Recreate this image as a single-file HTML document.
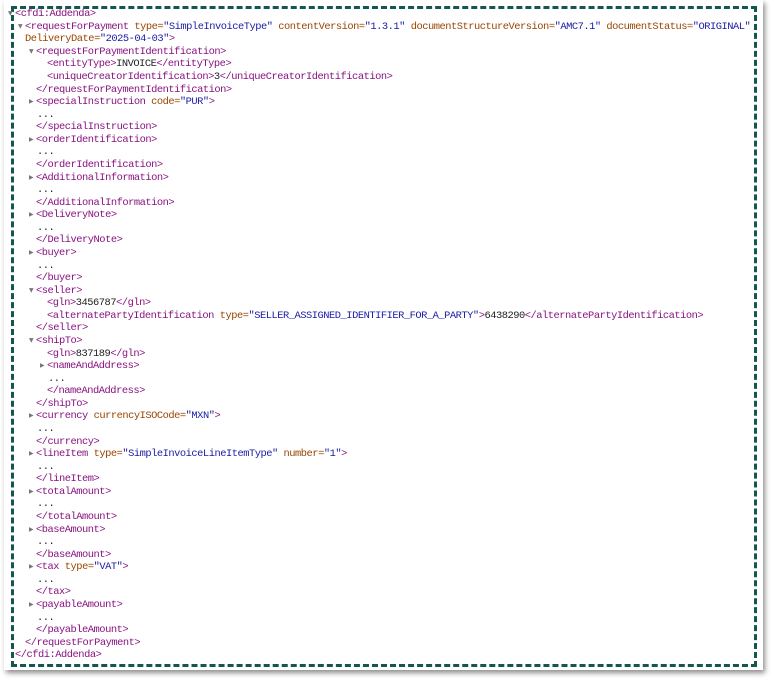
<!DOCTYPE html>
<html><head><meta charset="utf-8">
<style>
html,body{margin:0;padding:0;background:#fff;}
body{width:771px;height:679px;position:relative;overflow:hidden;}
.panel{position:absolute;left:4px;top:0;width:759px;height:670px;background:#fff;box-shadow:2px 3px 5px rgba(0,0,0,0.45);}
.border{position:absolute;left:11px;top:6px;width:740px;height:655px;border:3px dashed #14574f;}
.w{position:absolute;left:0;top:1.5px;width:771px;height:670px;}
.l{position:absolute;font-family:"Liberation Mono",monospace;font-size:10.4px;letter-spacing:-0.48px;line-height:12.57px;height:12.57px;white-space:pre;color:#222;}
.t{color:#881280}.a{color:#994500}.v{color:#1a1aa6}
.tri{position:absolute;left:-7px;top:0;font-size:6px;letter-spacing:0;color:#777;font-family:"DejaVu Sans",sans-serif;}
</style></head><body>
<div class="panel"></div>
<div class="border"></div>
<div class="w">
<div class="l" style="left:15px;top:6.7px"><span class="tri">▼</span><span class="t">&lt;cfdi:Addenda&gt;</span></div>
<div class="l" style="left:25px;top:19.27px"><span class="tri">▼</span><span class="t">&lt;requestForPayment</span> <span class="a">type=</span><span class="v">"SimpleInvoiceType"</span> <span class="a">contentVersion=</span><span class="v">"1.3.1"</span> <span class="a">documentStructureVersion=</span><span class="v">"AMC7.1"</span> <span class="a">documentStatus=</span><span class="v">"ORIGINAL"</span></div>
<div class="l" style="left:25px;top:31.84px"><span class="a">DeliveryDate=</span><span class="v">"2025-04-03"</span><span class="t">&gt;</span></div>
<div class="l" style="left:36px;top:44.41px"><span class="tri">▼</span><span class="t">&lt;requestForPaymentIdentification&gt;</span></div>
<div class="l" style="left:47px;top:56.98px"><span class="t">&lt;entityType&gt;</span>INVOICE<span class="t">&lt;/entityType&gt;</span></div>
<div class="l" style="left:47px;top:69.55px"><span class="t">&lt;uniqueCreatorIdentification&gt;</span>3<span class="t">&lt;/uniqueCreatorIdentification&gt;</span></div>
<div class="l" style="left:36px;top:82.12px"><span class="t">&lt;/requestForPaymentIdentification&gt;</span></div>
<div class="l" style="left:36px;top:94.69px"><span class="tri">▶</span><span class="t">&lt;specialInstruction</span> <span class="a">code=</span><span class="v">"PUR"</span><span class="t">&gt;</span></div>
<div class="l" style="left:37px;top:107.26px">...</div>
<div class="l" style="left:36px;top:119.83px"><span class="t">&lt;/specialInstruction&gt;</span></div>
<div class="l" style="left:36px;top:132.4px"><span class="tri">▶</span><span class="t">&lt;orderIdentification&gt;</span></div>
<div class="l" style="left:37px;top:144.97px">...</div>
<div class="l" style="left:36px;top:157.54px"><span class="t">&lt;/orderIdentification&gt;</span></div>
<div class="l" style="left:36px;top:170.11px"><span class="tri">▶</span><span class="t">&lt;AdditionalInformation&gt;</span></div>
<div class="l" style="left:37px;top:182.68px">...</div>
<div class="l" style="left:36px;top:195.25px"><span class="t">&lt;/AdditionalInformation&gt;</span></div>
<div class="l" style="left:36px;top:207.82px"><span class="tri">▶</span><span class="t">&lt;DeliveryNote&gt;</span></div>
<div class="l" style="left:37px;top:220.39px">...</div>
<div class="l" style="left:36px;top:232.96px"><span class="t">&lt;/DeliveryNote&gt;</span></div>
<div class="l" style="left:36px;top:245.53px"><span class="tri">▶</span><span class="t">&lt;buyer&gt;</span></div>
<div class="l" style="left:37px;top:258.1px">...</div>
<div class="l" style="left:36px;top:270.67px"><span class="t">&lt;/buyer&gt;</span></div>
<div class="l" style="left:36px;top:283.24px"><span class="tri">▼</span><span class="t">&lt;seller&gt;</span></div>
<div class="l" style="left:47px;top:295.81px"><span class="t">&lt;gln&gt;</span>3456787<span class="t">&lt;/gln&gt;</span></div>
<div class="l" style="left:47px;top:308.38px"><span class="t">&lt;alternatePartyIdentification</span> <span class="a">type=</span><span class="v">"SELLER_ASSIGNED_IDENTIFIER_FOR_A_PARTY"</span><span class="t">&gt;</span>6438290<span class="t">&lt;/alternatePartyIdentification&gt;</span></div>
<div class="l" style="left:36px;top:320.95px"><span class="t">&lt;/seller&gt;</span></div>
<div class="l" style="left:36px;top:333.52px"><span class="tri">▼</span><span class="t">&lt;shipTo&gt;</span></div>
<div class="l" style="left:47px;top:346.09px"><span class="t">&lt;gln&gt;</span>837189<span class="t">&lt;/gln&gt;</span></div>
<div class="l" style="left:47px;top:358.66px"><span class="tri">▶</span><span class="t">&lt;nameAndAddress&gt;</span></div>
<div class="l" style="left:48px;top:371.23px">...</div>
<div class="l" style="left:47px;top:383.8px"><span class="t">&lt;/nameAndAddress&gt;</span></div>
<div class="l" style="left:36px;top:396.37px"><span class="t">&lt;/shipTo&gt;</span></div>
<div class="l" style="left:36px;top:408.94px"><span class="tri">▶</span><span class="t">&lt;currency</span> <span class="a">currencyISOCode=</span><span class="v">"MXN"</span><span class="t">&gt;</span></div>
<div class="l" style="left:37px;top:421.51px">...</div>
<div class="l" style="left:36px;top:434.08px"><span class="t">&lt;/currency&gt;</span></div>
<div class="l" style="left:36px;top:446.65px"><span class="tri">▶</span><span class="t">&lt;lineItem</span> <span class="a">type=</span><span class="v">"SimpleInvoiceLineItemType"</span> <span class="a">number=</span><span class="v">"1"</span><span class="t">&gt;</span></div>
<div class="l" style="left:37px;top:459.22px">...</div>
<div class="l" style="left:36px;top:471.79px"><span class="t">&lt;/lineItem&gt;</span></div>
<div class="l" style="left:36px;top:484.36px"><span class="tri">▶</span><span class="t">&lt;totalAmount&gt;</span></div>
<div class="l" style="left:37px;top:496.93px">...</div>
<div class="l" style="left:36px;top:509.5px"><span class="t">&lt;/totalAmount&gt;</span></div>
<div class="l" style="left:36px;top:522.07px"><span class="tri">▶</span><span class="t">&lt;baseAmount&gt;</span></div>
<div class="l" style="left:37px;top:534.64px">...</div>
<div class="l" style="left:36px;top:547.21px"><span class="t">&lt;/baseAmount&gt;</span></div>
<div class="l" style="left:36px;top:559.78px"><span class="tri">▶</span><span class="t">&lt;tax</span> <span class="a">type=</span><span class="v">"VAT"</span><span class="t">&gt;</span></div>
<div class="l" style="left:37px;top:572.35px">...</div>
<div class="l" style="left:36px;top:584.92px"><span class="t">&lt;/tax&gt;</span></div>
<div class="l" style="left:36px;top:597.49px"><span class="tri">▶</span><span class="t">&lt;payableAmount&gt;</span></div>
<div class="l" style="left:37px;top:610.06px">...</div>
<div class="l" style="left:36px;top:622.63px"><span class="t">&lt;/payableAmount&gt;</span></div>
<div class="l" style="left:25px;top:635.2px"><span class="t">&lt;/requestForPayment&gt;</span></div>
<div class="l" style="left:15px;top:647.77px"><span class="t">&lt;/cfdi:Addenda&gt;</span></div>
</div>
</body></html>
